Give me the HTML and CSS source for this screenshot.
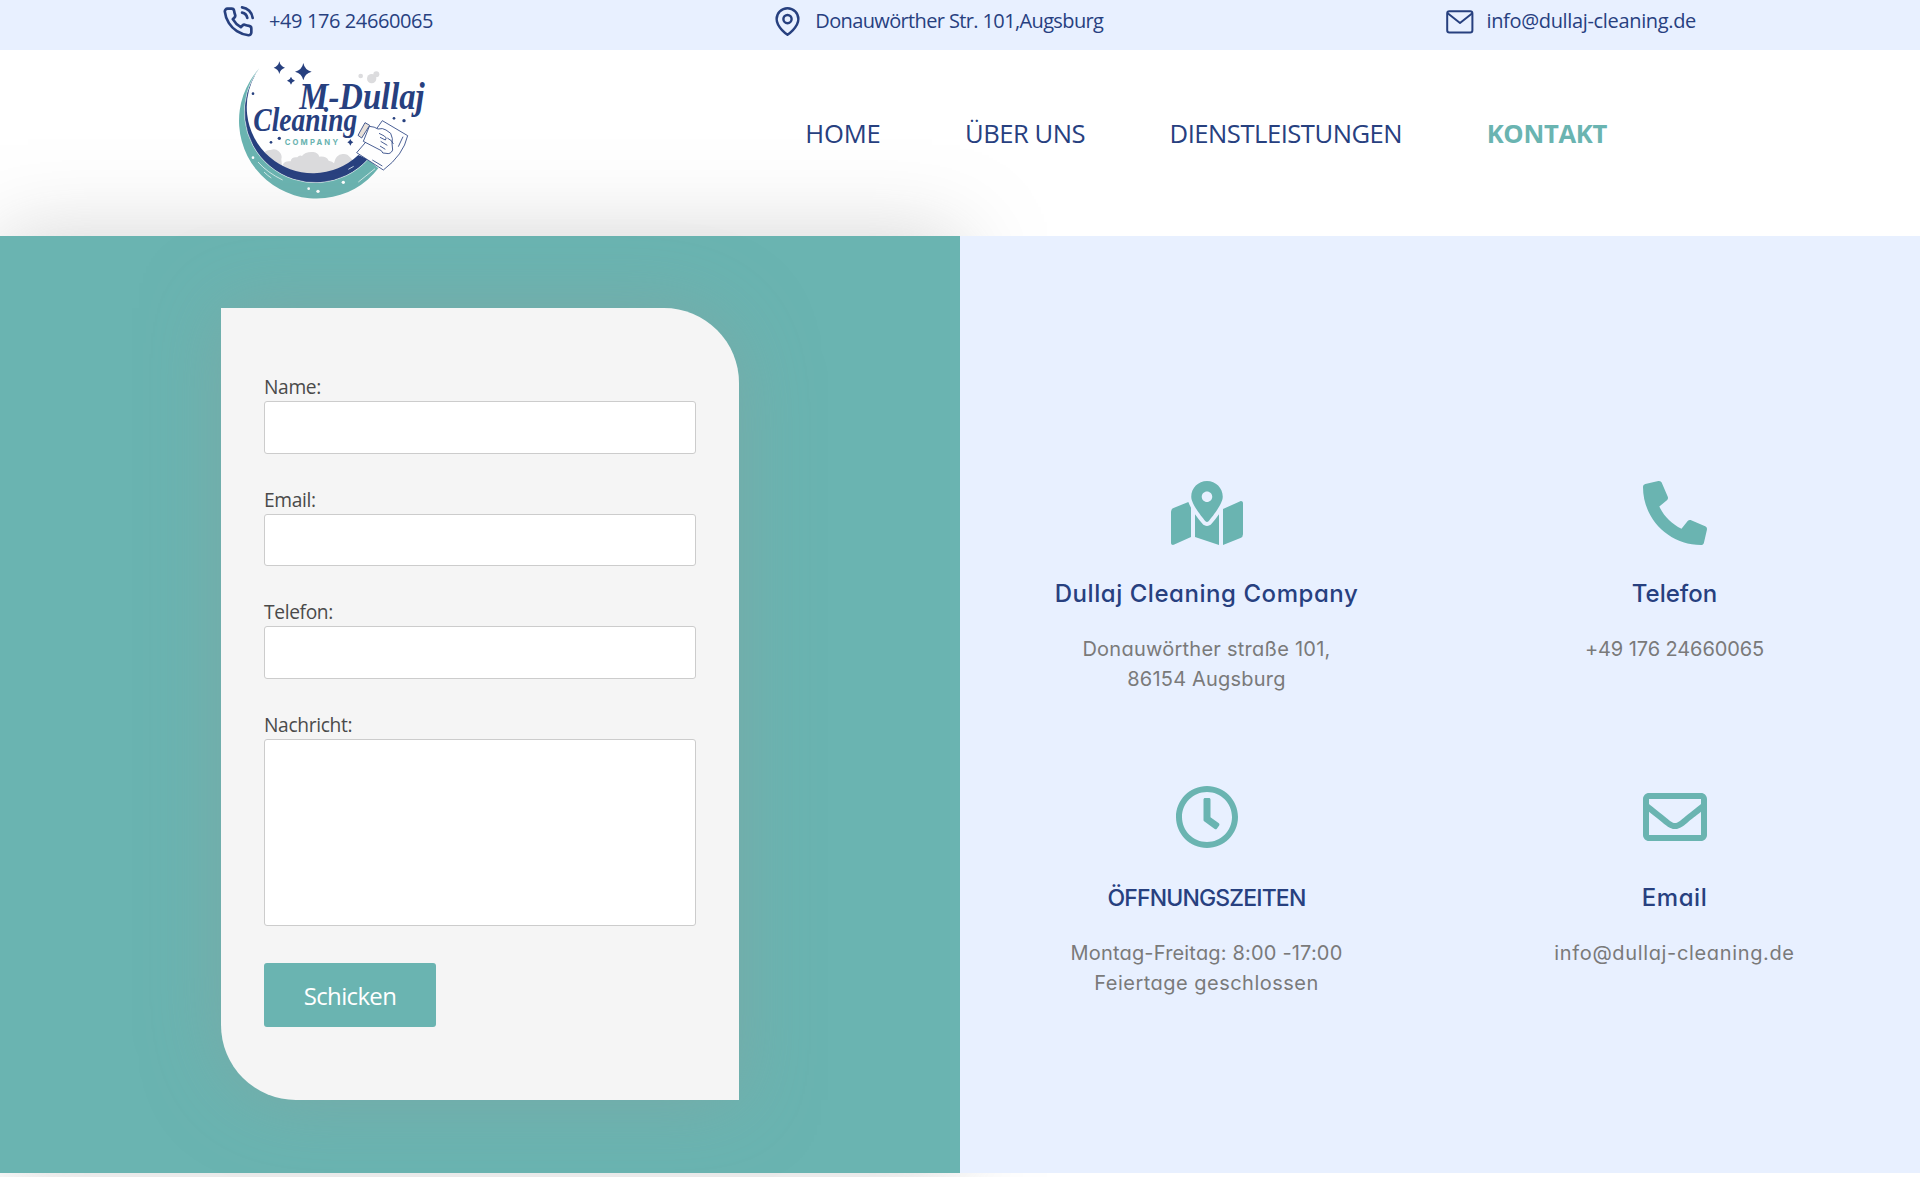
FILE: index.html
```html
<!DOCTYPE html>
<html lang="de">
<head>
<meta charset="utf-8">
<title>Kontakt – M-Dullaj Cleaning Company</title>
<link rel="stylesheet" href="styles.css">
</head>
<body>
<div class="topbar">
  <div class="topbar-item phone">
    <svg width="32" height="32" viewBox="0 0 24 24" class="line-icon"><path d="M15.05 5A5 5 0 0 1 19 8.95M15.05 1A9 9 0 0 1 23 8.94m-1 7.98v3a2 2 0 0 1-2.18 2 19.79 19.79 0 0 1-8.63-3.07 19.5 19.5 0 0 1-6-6 19.79 19.79 0 0 1-3.07-8.67A2 2 0 0 1 4.11 2h3a2 2 0 0 1 2 1.72 12.84 12.84 0 0 0 .7 2.81 2 2 0 0 1-.45 2.11L8.09 9.91a16 16 0 0 0 6 6l1.27-1.27a2 2 0 0 1 2.11-.45 12.84 12.84 0 0 0 2.81.7A2 2 0 0 1 22 16.92z"/></svg>
    <span>+49 176 24660065</span>
  </div>
  <div class="topbar-item address">
    <svg width="29" height="29" viewBox="0 0 24 24" class="line-icon"><path d="M21 10c0 7-9 13-9 13s-9-6-9-13a9 9 0 0 1 18 0z"/><circle cx="12" cy="10" r="3.4"/></svg>
    <span>Donauwörther Str. 101,Augsburg</span>
  </div>
  <div class="topbar-item mail">
    <svg width="28" height="24" viewBox="0 0 28 24" class="line-icon"><rect x="1.2" y="1.2" width="25.2" height="21.2" rx="2.2"/><path d="M2 3.5 14 13 26 3.5"/></svg>
    <span>info@dullaj-cleaning.de</span>
  </div>
</div>

<header class="header">
  <svg class="logo" width="200" height="150" viewBox="60 150 600 450" role="img">
    <g fill="#dcdcde">
      <path d="M158 470q4-22 24-20 14-6 24 4 12 10 8 24l2 22-12 2z"/>
      <path d="M218 494q6-12 24-10 2-14 20-12 6-8 14-4 10-14 34-12 14 2 18 14 22-2 28 12 12 2 16 8 4-26 26-28 14-2 22 10l10 10-70 42-70 16-50-20z"/>
      <circle cx="452" cy="228" r="7"/><circle cx="485" cy="236" r="14"/><circle cx="499" cy="223" r="9"/>
    </g>
    <path fill="#27407f" d="M148 205A212.75 212.75 0 0 0 474 478L445 465A198.2 198.2 0 0 1 148 205z"/>
    <path fill="#6ab4b1" d="M148 205A233.35 233.35 0 1 0 505 505L474 478A212.75 212.75 0 0 1 148 205z"/>
    <path fill="none" stroke="#fff" stroke-width="1.5" d="M148 205A212.75 212.75 0 0 0 474 478"/>
    <g fill="none" stroke="#e4f3f2" stroke-width="2.5">
      <path d="M144 486q28 32 74 54M162 516q10 10 22 18M415 508l16-9M445 546l50-40"/>
    </g>
    <g fill="#fff"><circle cx="129" cy="473" r="4"/><circle cx="296" cy="566" r="4"/><circle cx="324" cy="574" r="5"/><circle cx="400" cy="547" r="5"/></g>
    <g fill="#27407f">
      <path d="M208 184q3 15 17 19-14 4-17 19-3-15-17-19 14-4 17-19zM280 189q4 21 25 26-21 5-25 26-4-21-25-26 21-5 25-26zM243 230q2 9 12 12-10 3-12 12-2-9-12-12 10-3 12-12zM421 417q2 7 9 10-7 3-9 10-2-7-9-10 7-3 9-10z"/>
      <circle cx="129" cy="281" r="4"/><circle cx="183" cy="427" r="4"/><circle cx="208" cy="415" r="5"/><circle cx="552" cy="355" r="4"/><circle cx="582" cy="362" r="5"/>
    </g>
    <g class="logo-script">
      <text x="268" y="326" font-size="112" textLength="376" lengthAdjust="spacingAndGlyphs">M-Dullaj</text>
      <text x="130" y="393" font-size="104" textLength="312" lengthAdjust="spacingAndGlyphs">Cleaning</text>
    </g>
    <text class="logo-sub" x="224" y="434" textLength="160">COMPANY</text>
    <g fill="#fff" stroke="#27407f" stroke-width="2.5" stroke-linejoin="round">
      <path d="M517 362 593 407Q580 465 520 510L440 458 490 400z"/>
      <path d="M478 379q16 1 26 8 14-4 24 3l14 10q8 16 4 30l2 20q-6 14-20 10-12 2-14-8l-54-28z"/>
      <path fill="#e8e0d8" d="M465 368l14 8-24 38-11-8z"/>
      <path fill="none" d="M507 400l16 8q10 6 3 12l-16-8M512 424l20 12M510 438l16 10M532 414q16 8 18 18M565 440l14-30M487 480l30 18"/>
    </g>
  </svg>
  <nav class="nav">
    <a class="home">HOME</a>
    <a>ÜBER UNS</a>
    <a>DIENSTLEISTUNGEN</a>
    <a class="active">KONTAKT</a>
  </nav>
</header>

<main class="contact">
  <section class="form-panel">
    <form class="card">
      <label for="name">Name:</label>
      <input id="name" type="text">
      <label for="email">Email:</label>
      <input id="email" type="text">
      <label for="tel">Telefon:</label>
      <input id="tel" type="text">
      <label for="msg">Nachricht:</label>
      <textarea id="msg"></textarea>
      <button type="button">Schicken</button>
    </form>
  </section>
  <section class="info-panel">
    <div class="info">
      <svg width="72" height="64" viewBox="0 0 576 512"><path d="M288 0c-69.59 0-126 56.41-126 126 0 56.26 82.35 158.8 113.9 196.02 6.39 7.54 17.82 7.54 24.2 0C331.65 284.8 414 182.26 414 126 414 56.41 357.59 0 288 0zm0 168c-23.2 0-42-18.8-42-42s18.8-42 42-42 42 18.8 42 42-18.8 42-42 42zM20.12 215.95A32.006 32.006 0 0 0 0 245.66v250.32c0 11.32 11.43 19.06 21.94 14.86L160 448V214.92c-8.84-15.98-16.07-31.54-21.25-46.42L20.12 215.95zM288 359.67c-14.07 0-27.38-6.18-36.51-16.96-19.66-23.2-40.57-49.62-59.49-76.72v182l192 64V266c-18.92 27.09-39.82 53.52-59.49 76.72-9.13 10.77-22.44 16.95-36.51 16.95zm266.06-198.51L416 224v288l139.88-55.95A31.996 31.996 0 0 0 576 426.34V176.02c0-11.32-11.43-19.06-21.94-14.86z"/></svg>
      <h3 class="t-company">Dullaj Cleaning Company</h3>
      <p><span class="s-street">Donauwörther straße 101,</span><br><span class="s-city">86154 Augsburg</span></p>
    </div>
    <div class="info">
      <svg width="64" height="64" viewBox="0 0 512 512"><path d="M493.4 24.6l-104-24c-11.3-2.6-22.9 3.3-27.5 13.9l-48 112c-4.2 9.8-1.4 21.3 6.9 28l60.6 49.6c-36 76.7-98.9 140.5-177.2 177.2l-49.6-60.6c-6.8-8.3-18.2-11.1-28-6.9l-112 48C3.9 366.5-2 378.1.6 389.4l24 104C27.1 504.2 36.7 512 48 512c256.1 0 464-207.5 464-464 0-11.2-7.7-20.9-18.6-23.4z" transform="matrix(-1 0 0 1 512 0)"/></svg>
      <h3>Telefon</h3>
      <p class="s-phone">+49 176 24660065</p>
    </div>
    <div class="info">
      <svg width="64" height="64" viewBox="0 0 512 512"><path d="M256 8C119 8 8 119 8 256s111 248 248 248 248-111 248-248S393 8 256 8zm0 448c-110.5 0-200-89.5-200-200S145.5 56 256 56s200 89.5 200 200-89.5 200-200 200zm61.8-104.4l-84.9-61.7c-3.1-2.3-4.9-5.9-4.9-9.7V116c0-6.6 5.4-12 12-12h32c6.6 0 12 5.4 12 12v141.7l66.8 48.6c5.4 3.9 6.5 11.4 2.6 16.8L334.6 349c-3.9 5.3-11.4 6.5-16.8 2.6z"/></svg>
      <h3 class="t-hours">ÖFFNUNGSZEITEN</h3>
      <p><span class="s-days">Montag-Freitag: 8:00 -17:00</span><br><span class="s-closed">Feiertage geschlossen</span></p>
    </div>
    <div class="info">
      <svg width="64" height="64" viewBox="0 0 512 512"><path d="M464 64H48C21.49 64 0 85.49 0 112v288c0 26.51 21.49 48 48 48h416c26.51 0 48-21.49 48-48V112c0-26.51-21.49-48-48-48zm0 48v40.805c-22.422 18.259-58.168 46.651-134.587 106.49-16.841 13.247-50.201 45.072-73.413 44.701-23.208.375-56.579-31.459-73.413-44.701C106.18 199.465 70.425 171.067 48 152.805V112h416zM48 400V214.398c22.914 18.251 55.409 43.862 104.938 82.646 21.857 17.205 60.134 55.186 103.062 54.955 42.717.231 80.509-37.199 103.053-54.947 49.528-38.783 82.032-64.401 104.947-82.653V400H48z"/></svg>
      <h3 class="t-email">Email</h3>
      <p class="s-email">info@dullaj-cleaning.de</p>
    </div>
  </section>
</main>
</body>
</html>
```
FILE: styles.css
```css
* { box-sizing: border-box; }

body {
  margin: 0;
  height: 1177px;
  overflow: hidden;
  background: #fff;
  font-family: "Open Sans", "Noto Sans", sans-serif;
}

.topbar {
  display: flex;
  justify-content: space-between;
  height: 50px;
  padding: 0 224px 8px 222px;
  background: #e8f0ff;
  color: #27407f;
  font-size: 20px;
  line-height: 26px;
}
.topbar-item { display: flex; align-items: center; }
.topbar-item svg { position: relative; top: 0.5px; }
.phone { gap: 15px; letter-spacing: -0.4px; }
.address { gap: 13px; margin-right: 3px; letter-spacing: -0.63px; }
.mail { gap: 12px; letter-spacing: -0.34px; }

.line-icon {
  fill: none;
  stroke: #27407f;
  stroke-width: 2;
  stroke-linecap: round;
  stroke-linejoin: round;
}

.header {
  display: flex;
  align-items: center;
  justify-content: space-between;
  height: 186px;
  padding: 0 313px 36px 230px;
}
.logo { display: block; overflow: visible; }
.logo-script {
  font-family: "Liberation Serif", serif;
  font-weight: 700;
  font-style: italic;
  fill: #27407f;
}
.logo-sub {
  font: 700 23px Inter, sans-serif;
  fill: #6ab4b1;
}

.nav {
  display: flex;
  gap: 84.5px;
  padding-top: 18px;
  font-size: 25.6px;
  line-height: 36px;
  letter-spacing: -0.48px;
  color: #27407f;
}
.nav .home { letter-spacing: -0.2px; }
.nav .active { color: #6ab4b1; font-weight: 700; letter-spacing: -0.3px; }

.contact { display: flex; height: 937px; }

.form-panel {
  display: flex;
  align-items: center;
  justify-content: center;
  width: 960px;
  padding-bottom: 1px;
  background: #6ab4b1;
  box-shadow: 0 0 80px rgba(128, 128, 128, 0.34);
}
.card {
  display: flex;
  flex-direction: column;
  width: 518px;
  height: 792px;
  padding: 66px 43px 0;
  background: #f5f5f5;
  border-radius: 0 75px 0 75px;
  box-shadow: 0 0 75px rgba(136, 160, 158, 0.5);
}
.card label {
  height: 27px;
  font-size: 19.2px;
  line-height: 26px;
  letter-spacing: -0.35px;
  color: #4a4a4a;
}
.card input,
.card textarea {
  display: block;
  width: 100%;
  height: 52.6px;
  margin: 0 0 33px;
  border: 1px solid #ccc;
  border-radius: 3px;
  background: #fff;
  resize: none;
}
.card textarea { height: 187px; margin-bottom: 37px; }
.card button {
  width: 172px;
  height: 64px;
  padding: 2px 0 0;
  border: 0;
  border-radius: 3px;
  background: #6ab4b1;
  color: #fff;
  font: 24px "Open Sans", sans-serif;
  letter-spacing: -0.65px;
}

.info-panel {
  display: grid;
  grid-template-columns: 468px 468px;
  grid-auto-rows: 304px;
  align-content: start;
  justify-content: center;
  width: 960px;
  padding: 245px 0 0 1px;
  background: #e8f0ff;
}
.info {
  display: flex;
  flex-direction: column;
  align-items: center;
  font-family: Inter, "Noto Sans", sans-serif;
  font-feature-settings: "cv11";
  text-align: center;
}
.info svg { fill: #6ab4b1; }
.info h3 {
  margin: 34px 0 25px;
  font-size: 24px;
  line-height: 30px;
  font-weight: 500;
  color: #27407f;
}
.info p {
  margin: 0;
  font-size: 20px;
  line-height: 30px;
  color: #7a7a7a;
}
.info .t-company { letter-spacing: 0.55px; }
.info .t-hours { font-size: 23px; letter-spacing: -0.85px; }
.info .t-email { letter-spacing: 0.6px; }
.s-street { letter-spacing: 0.25px; }
.s-city { letter-spacing: 0.2px; }
.s-days { letter-spacing: 0.18px; }
.s-closed { letter-spacing: 0.48px; }
.info .s-phone { letter-spacing: -0.1px; }
.info .s-email { letter-spacing: 0.65px; }
```
